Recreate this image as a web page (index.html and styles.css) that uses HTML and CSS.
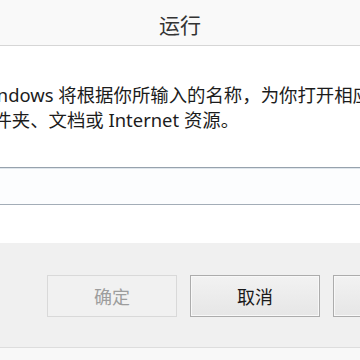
FILE: index.html
```html
<!DOCTYPE html>
<html lang="zh-CN">
<head>
<meta charset="utf-8">
<title>运行</title>
<link rel="stylesheet" href="styles.css">
</head>
<body>
<div class="dialog">
  <header class="titlebar"><h1 class="title">运行</h1></header>
  <main class="content">
    <p class="desc">Windows 将根据你所输入的名称，为你打开相应的程序、<br>文件夹、文档或 Internet 资源。</p>
    <div class="field"><input class="input" type="text" aria-label="打开"></div>
  </main>
  <footer class="actions">
    <button class="btn" disabled>确定</button>
    <button class="btn btn-default">取消</button>
    <button class="btn">浏览(B)...</button>
  </footer>
  <div class="bottom"></div>
</div>
</body>
</html>
```
FILE: styles.css
```css
html, body {
  margin: 0;
  padding: 0;
  background: #ffffff;
  overflow: hidden;
}
body {
  width: 360px;
  height: 360px;
  font-family: "Noto Sans", "Noto Sans CJK SC", sans-serif;
}
.dialog {
  display: flex;
  flex-direction: column;
  width: 360px;
  height: 360px;
  overflow: hidden;
}
.titlebar {
  height: 45px;
  background: #f9f9f9;
  border-bottom: 1px solid #d6d6d6;
  display: flex;
  align-items: center;
  justify-content: center;
  flex: none;
}
.title {
  margin: 0;
  font-family: "Noto Sans CJK SC", sans-serif;
  font-weight: 400;
  font-size: 21px;
  line-height: 24px;
  color: #333333;
  padding-left: 0;
  padding-top: 2px;
}
.content {
  background: #ffffff;
  padding-top: 36px;
  flex: none;
}
.desc {
  margin: 0 0 0 -25px;
  font-size: 18.4px;
  line-height: 25px;
  color: #1c1c1c;
  white-space: nowrap;
}
.field {
  margin-top: 35px;
  margin-bottom: 38px;
}
.input {
  display: block;
  box-sizing: border-box;
  width: 100%;
  height: 38px;
  margin: 0;
  border: 0;
  border-top: 1px solid #97a2ad;
  border-bottom: 1px solid #a3adb7;
  box-shadow: inset 0 1px 0 #dfe6ec;
  background: #fcfdfe;
  outline: none;
}
.actions {
  display: flex;
  gap: 13px;
  padding: 32px 0 30px 47px;
  background: #f0f0f0;
  border-bottom: 1px solid #dddddd;
  flex: none;
}
.btn {
  flex: none;
  box-sizing: border-box;
  width: 130px;
  height: 42px;
  margin: 0;
  padding: 0;
  font-family: "Noto Sans CJK SC", sans-serif;
  font-size: 18px;
  color: #1a1a1a;
  background: linear-gradient(#f2f2f2, #e6e6e6);
  border: 1px solid #acacac;
  box-shadow: inset 0 0 0 1px #f8f8f8;
}
.btn:disabled {
  color: #9d9d9d;
  background: #f1f1f1;
  border-color: #d9d9d9;
  box-shadow: none;
}
.bottom {
  flex: 1;
  background: #f8f8f8;
}
```
